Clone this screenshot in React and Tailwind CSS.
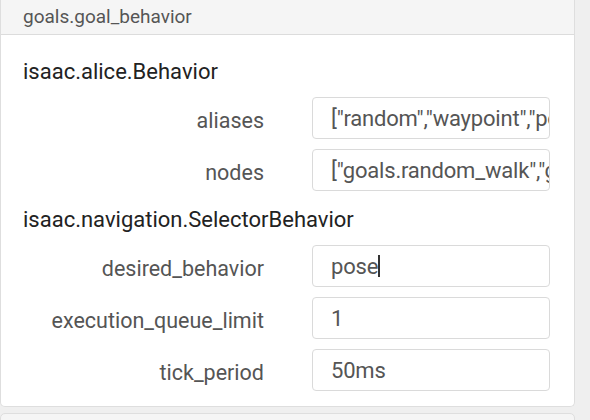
import React from 'react';

const sections = [
  {
    title: 'isaac.alice.Behavior',
    fields: [
      { name: 'aliases', value: '["random","waypoint","pose"]' },
      { name: 'nodes', value: '["goals.random_walk","goals.waypoint"]' }
    ]
  },
  {
    title: 'isaac.navigation.SelectorBehavior',
    fields: [
      { name: 'desired_behavior', value: 'pose', caret: true },
      { name: 'execution_queue_limit', value: '1' },
      { name: 'tick_period', value: '50ms' }
    ]
  }
];

const App = () => {
  return (
    <div className="w-[590px] h-[420px] overflow-hidden bg-[#efefef] font-['Roboto',sans-serif]">
      <div className="w-[575px] bg-white border border-t-0 border-[#dedede] rounded-b-[5px]">
        {/* Header */}
        <div className="h-[35px] bg-[#f5f5f5] border-b border-[#dcdcdc] pl-[22px] flex items-center text-[19px] text-[#555]">
          goals.goal_behavior
        </div>

        {/* Body */}
        <div className="pt-[13px] pb-[10px]">
          {sections.map((section, sIdx) => (
            <div key={sIdx}>
              <div className="h-[44px] flex items-center pt-[3px] pl-[22px] text-[22px] text-[#222]">
                {section.title}
              </div>
              {section.fields.map((field, fIdx) => (
                <div key={fIdx} className="h-[52px] flex items-center">
                  <div className="w-[263px] pt-[6px] text-right text-[21.5px] text-[#555] leading-none">
                    {field.name}
                  </div>
                  <div className="ml-[48px] w-[238px] h-[42px] border border-[#dadada] rounded-[4px] pl-[18px] flex items-center overflow-hidden whitespace-nowrap text-[22px] text-[#555] tracking-[-0.2px]">
                    {field.value}
                    {field.caret && <span className="inline-block w-[1.5px] h-[22px] bg-[#333]" />}
                  </div>
                </div>
              ))}
            </div>
          ))}
        </div>
      </div>

      {/* Next card */}
      <div className="mt-[6px] w-[575px] h-[20px] bg-[#f5f5f5] border border-[#dedede] rounded-t-[5px]" />
    </div>
  );
};

export default App;
